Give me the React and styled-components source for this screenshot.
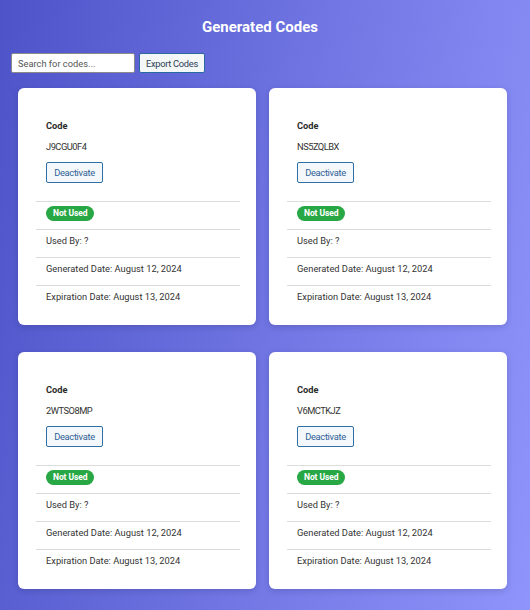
import React from "react";
import styled, { createGlobalStyle } from "styled-components";

const GlobalStyle = createGlobalStyle`
  html, body {
    margin: 0;
    padding: 0;
  }
  body {
    font-family: Roboto, "Liberation Sans", sans-serif;
  }
  * {
    box-sizing: border-box;
  }
`;

const Page = styled.div`
  min-height: 100vh;
  background: linear-gradient(100deg, #4e54c8 0%, #8f94fb 100%);
  padding: 17px 0 20px;
`;

const Title = styled.h1`
  margin: 0 10px 16px 0;
  font-size: 15px;
  line-height: 20px;
  font-weight: 700;
  color: #ffffff;
  text-align: center;
`;

const Toolbar = styled.div`
  display: flex;
  gap: 4px;
  padding-left: 11px;
  margin-bottom: 15px;
`;

const SearchInput = styled.input`
  width: 124px;
  height: 20px;
  padding: 0 6px;
  border: 1px solid #8a8a8a;
  border-radius: 2px;
  background: #fff;
  font-family: Roboto, "Liberation Sans", sans-serif;
  font-size: 9.3px;
  color: #333;
  outline: none;

  &::placeholder {
    color: #555;
  }
`;

const ExportButton = styled.button`
  width: 66px;
  height: 20px;
  padding: 0;
  border: 1px solid #2b6aa0;
  border-radius: 2px;
  background: #f4f7f7;
  font-family: Roboto, "Liberation Sans", sans-serif;
  font-size: 9.3px;
  letter-spacing: -0.3px;
  color: #2c3d55;
`;

const Grid = styled.div`
  display: grid;
  grid-template-columns: repeat(2, 238px);
  column-gap: 13px;
  row-gap: 27px;
  padding-left: 18px;
`;

const Card = styled.div`
  background: #ffffff;
  border-radius: 6px;
  padding: 18px 16px 12px 18px;
  box-shadow: 0 2px 6px rgba(30, 30, 80, 0.18);
`;

const TopSection = styled.div`
  padding: 14px 10px 18px;
  display: flex;
  flex-direction: column;
  align-items: flex-start;
`;

const Label = styled.div`
  font-size: 9.3px;
  line-height: 12px;
  font-weight: 700;
  color: #2b2b2b;
  margin-bottom: 9px;
`;

const CodeValue = styled.div`
  font-size: 9.3px;
  line-height: 12px;
  letter-spacing: -0.5px;
  color: #333;
  margin-bottom: 9px;
`;

const DeactivateButton = styled.button`
  width: 57px;
  height: 21px;
  padding: 0;
  border: 1px solid #2f6fa8;
  border-radius: 2px;
  background: #f5f8fa;
  font-family: Roboto, "Liberation Sans", sans-serif;
  font-size: 9.3px;
  letter-spacing: -0.3px;
  color: #2f5f96;
`;

const Row = styled.div`
  border-top: 1px solid #dcdcdc;
  padding: ${(p) => (p.$badge ? "4px 10px 8px" : "5px 10px 10px")};
  font-size: 9.3px;
  line-height: 12px;
  color: #333;
`;

const Badge = styled.span`
  display: inline-block;
  height: 15px;
  line-height: 15px;
  padding: 0 7px;
  border-radius: 8px;
  background: #28a745;
  color: #fff;
  font-size: 8.5px;
  font-weight: 700;
  letter-spacing: -0.1px;
`;

const codes = ["J9CGU0F4", "NS5ZQLBX", "2WTSO8MP", "V6MCTKJZ"];

function CodeCard({ code }) {
  return (
    <Card>
      <TopSection>
        <Label>Code</Label>
        <CodeValue>{code}</CodeValue>
        <DeactivateButton>Deactivate</DeactivateButton>
      </TopSection>
      <Row $badge>
        <Badge>Not Used</Badge>
      </Row>
      <Row>Used By: ?</Row>
      <Row>Generated Date: August 12, 2024</Row>
      <Row>Expiration Date: August 13, 2024</Row>
    </Card>
  );
}

export default function App() {
  return (
    <>
      <GlobalStyle />
      <Page>
        <Title>Generated Codes</Title>
        <Toolbar>
          <SearchInput placeholder="Search for codes..." />
          <ExportButton>Export Codes</ExportButton>
        </Toolbar>
        <Grid>
          {codes.map((c) => (
            <CodeCard key={c} code={c} />
          ))}
        </Grid>
      </Page>
    </>
  );
}
